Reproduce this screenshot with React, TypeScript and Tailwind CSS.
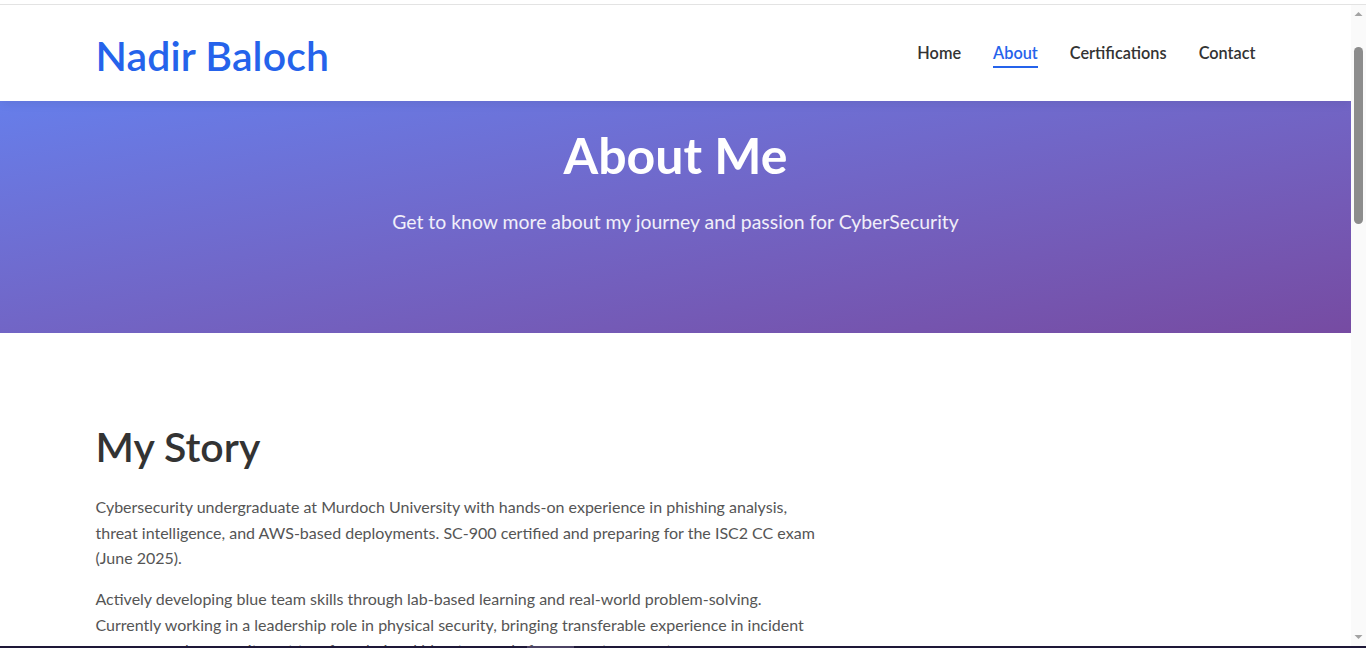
import React from 'react';

const navLinks = ['Home', 'About', 'Certifications', 'Contact'];

function Scrollbar() {
  return (
    <div className="w-[15px] shrink-0 bg-[#fafafa] flex flex-col items-center">
      <svg width="15" height="17" viewBox="0 0 15 17" className="shrink-0">
        <path d="M3.5 11 L7.5 7 L11.5 11 Z" fill="#a3a3a3" />
      </svg>
      <div className="w-[9px] h-[177px] mt-[25px] rounded-full bg-[#8c8c8c]"></div>
      <div className="flex-1"></div>
      <svg width="15" height="17" viewBox="0 0 15 17" className="shrink-0">
        <path d="M3.5 6 L7.5 10 L11.5 6 Z" fill="#a3a3a3" />
      </svg>
    </div>
  );
}

export default function App() {
  return (
    <div className="h-screen flex flex-col overflow-hidden bg-white font-['Lato','Open_Sans',sans-serif]">
      <div className="h-[5px] shrink-0 bg-white border-b border-[#e3e3e3]"></div>

      <div className="flex-1 min-h-0 flex">
        <main className="flex-1 min-w-0 overflow-hidden">
          <header className="relative z-10 bg-white shadow-[0_2px_10px_rgba(0,0,0,0.08)]">
            <div className="max-w-[1200px] mx-auto px-5 h-[96px] flex items-center justify-between">
              <h1 className="text-[41px] font-semibold text-[#2563eb] tracking-[0.1px] leading-none pt-1">
                Nadir Baloch
              </h1>
              <nav className="flex items-center gap-8">
                {navLinks.map(link => (
                  <a
                    key={link}
                    href="#"
                    className={
                      link === 'About'
                        ? 'text-[16.3px] font-semibold text-[#2563eb] border-b-2 border-[#2563eb] pb-[1px] mt-[3px]'
                        : 'text-[16.3px] font-semibold text-[#333] pb-[1px] mt-[3px] border-b-2 border-transparent'
                    }
                  >
                    {link}
                  </a>
                ))}
              </nav>
            </div>
          </header>

          <section className="bg-gradient-to-br from-[#667eea] to-[#764ba2] text-white text-center pt-[24px] pb-[96px]">
            <h2 className="text-[50px] font-bold leading-[1.2] mb-[21px]">About Me</h2>
            <p className="text-[19.4px] leading-[1.6] text-white/90">
              Get to know more about my journey and passion for CyberSecurity
            </p>
          </section>

          <section className="pt-[89px] pb-20">
            <div className="max-w-[1200px] mx-auto px-5 grid grid-cols-[725px_1fr] gap-16">
              <div>
                <h2 className="text-[41px] font-semibold text-[#333] leading-[1.2] mb-[23px]">My Story</h2>
                <p className="text-[16px] leading-[1.6] text-[#555] mb-[15px]">
                  Cybersecurity undergraduate at Murdoch University with hands-on experience in phishing analysis,
                  threat intelligence, and AWS-based deployments. SC-900 certified and preparing for the ISC2 CC exam
                  (June 2025).
                </p>
                <p className="text-[16px] leading-[1.6] text-[#555] mb-[15px]">
                  Actively developing blue team skills through lab-based learning and real-world problem-solving.
                  Currently working in a leadership role in physical security, bringing transferable experience in incident
                  response and a commitment to a foundational blue-team role for my next career step.
                </p>
              </div>
              <div></div>
            </div>
          </section>
        </main>
        <Scrollbar />
      </div>

      <div className="h-[2px] shrink-0 bg-[#1e1838] flex">
        <div className="ml-[527px] w-[47px] bg-[#4b4263]"></div>
      </div>
    </div>
  );
}
